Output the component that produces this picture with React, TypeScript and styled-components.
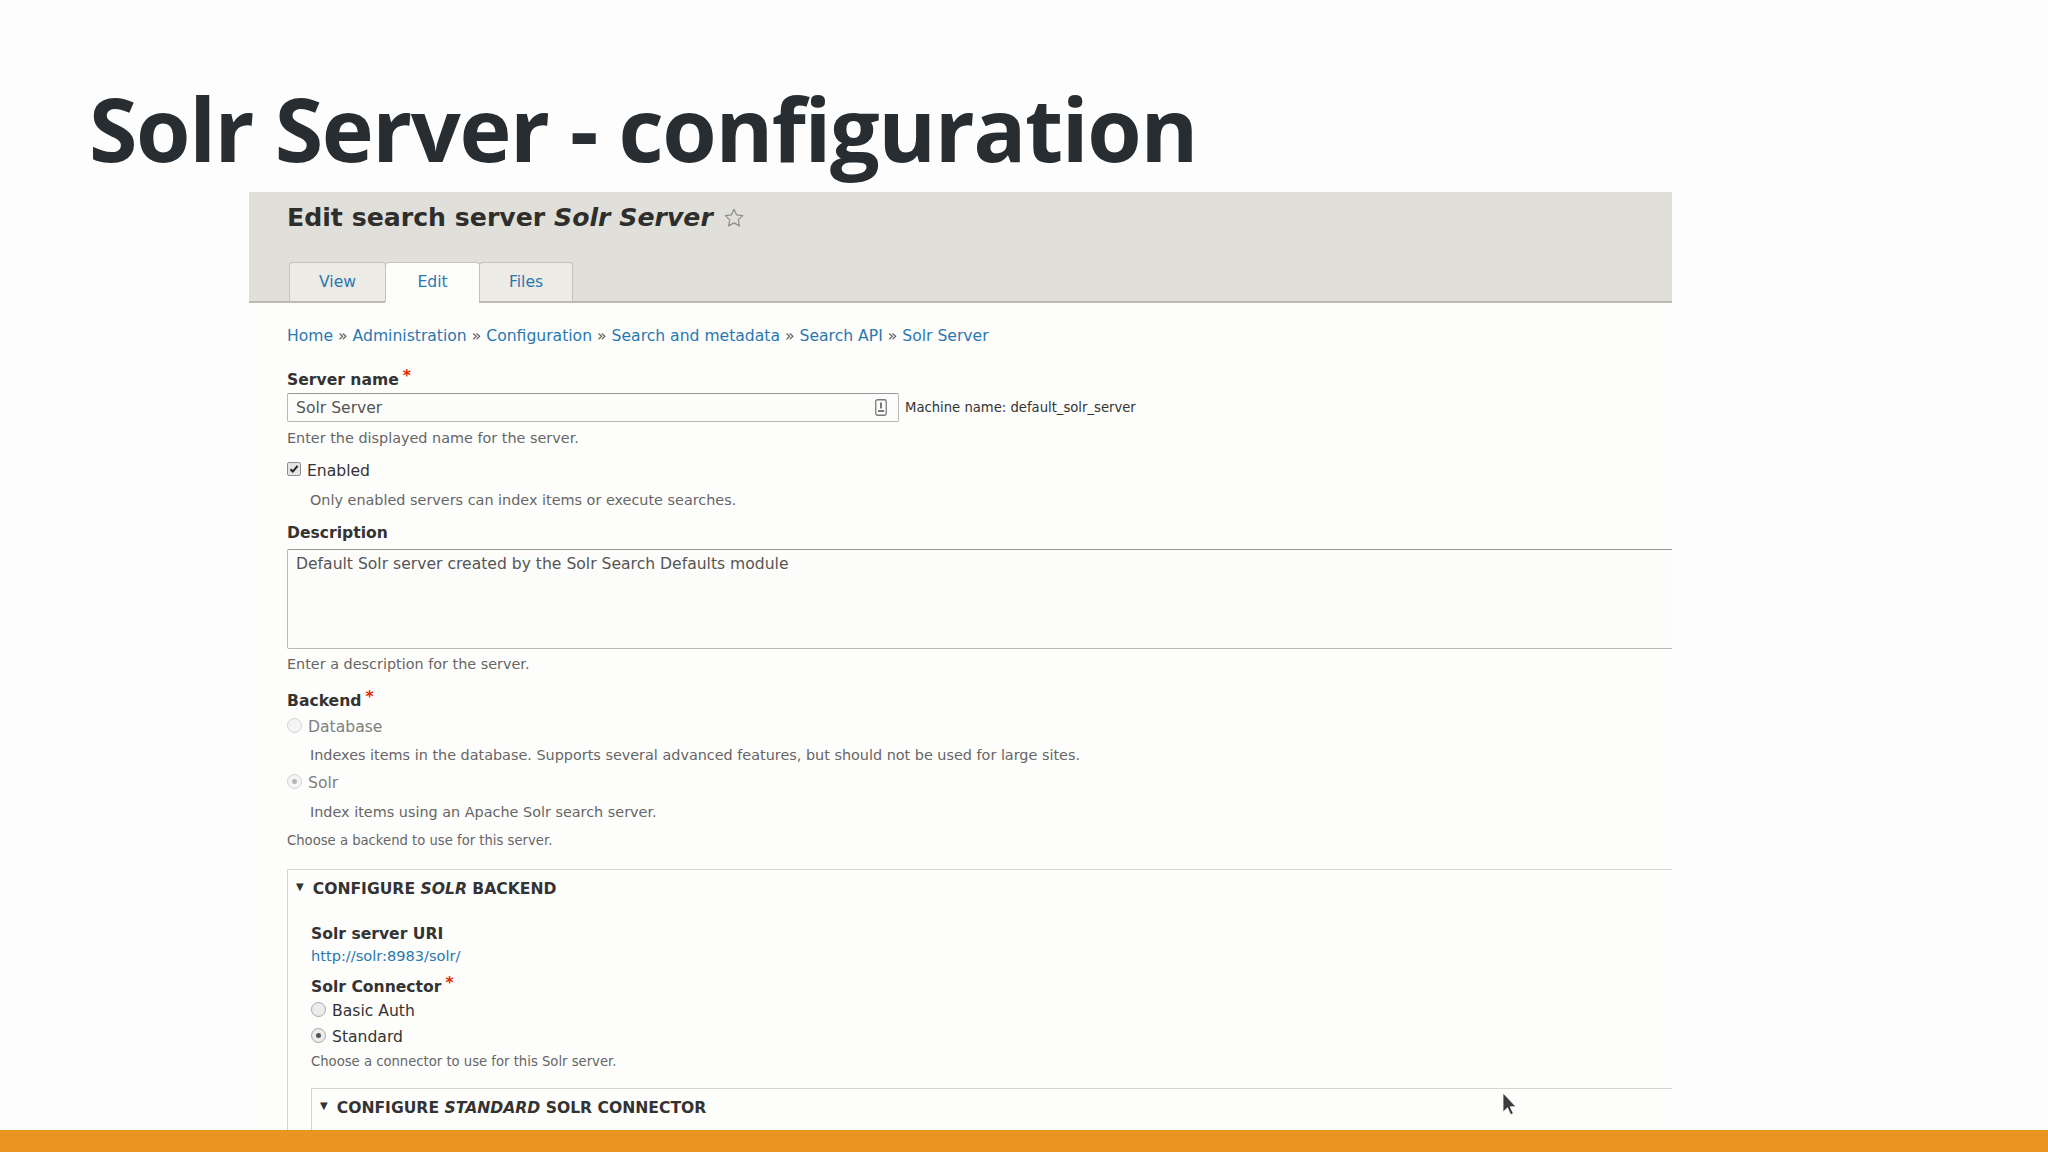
import React from 'react';
import styled, { createGlobalStyle } from 'styled-components';

const GlobalStyle = createGlobalStyle`
  html, body {
    margin: 0;
    padding: 0;
    background: #ffffff;
  }
`;

const Slide = styled.div`
  width: 2048px;
  height: 1152px;
  display: flex;
  flex-direction: column;
  background: #fdfdfd;
  overflow: hidden;
`;

const Title = styled.h1`
  margin: 83px 0 0 89px;
  font-family: 'Open Sans', sans-serif;
  font-weight: 700;
  font-size: 88px;
  line-height: 90px;
  letter-spacing: -1.4px;
  color: #272d31;
`;

const Shot = styled.div`
  position: relative;
  margin: 19px 0 0 249px;
  width: 1423px;
  flex: 1;
  overflow: hidden;
  background: #fdfdfb;
  font-family: 'DejaVu Sans', sans-serif;
  font-size: 15.6px;
  color: #333;
`;

const Header = styled.div`
  background: #e0dfd9;
  padding: 10px 0 0 38px;
  border-bottom: 2px solid #bcbab3;
`;

const PageTitle = styled.div`
  display: flex;
  align-items: center;
  gap: 10px;
  font-size: 25.2px;
  line-height: 32px;
  font-weight: bold;
  color: #2e2e2c;

  em {
    font-style: oblique;
  }
`;

const Tabs = styled.div`
  display: flex;
  margin: 28px 0 -2px 2px;
`;

const Tab = styled.div<{ $active?: boolean; $w: number }>`
  height: 41px;
  box-sizing: border-box;
  display: flex;
  align-items: center;
  justify-content: center;
  width: ${p => p.$w}px;
  color: #2a78b0;
  font-size: 15.6px;
  background: ${p => (p.$active ? '#fdfdfb' : '#ecebe6')};
  border: 1px solid #c4c2bb;
  border-bottom: ${p => (p.$active ? '2px solid #fdfdfb' : '2px solid #bcbab3')};
  border-radius: 4px 4px 0 0;
  margin-right: -1px;
`;

const Body = styled.div`
  padding: 23px 0 0 38px;
`;

const Crumbs = styled.div`
  line-height: 20px;
  color: #555;

  a {
    color: #2a78b0;
    text-decoration: none;
  }
`;

const Sep = styled.span`
  margin: 0 5px;
  color: #555;
`;

const Label = styled.div<{ $mt: number }>`
  margin-top: ${p => p.$mt}px;
  line-height: 20px;
  font-weight: bold;
  color: #333;
`;

const Req = styled.span`
  color: #e62600;
  margin-left: 4px;
  position: relative;
  top: -4px;
`;

const NameRow = styled.div`
  display: flex;
  align-items: center;
  margin-top: 3px;
`;

const TextInput = styled.div`
  width: 612px;
  height: 29px;
  box-sizing: border-box;
  display: flex;
  align-items: center;
  justify-content: space-between;
  padding: 0 11px 0 8px;
  border: 1px solid #b8b8b8;
  border-top-color: #999;
  border-radius: 2px;
  background: #fcfcfa;
  color: #555;
`;

const MachineName = styled.span`
  margin-left: 6px;
  font-size: 13.2px;
  color: #333;
`;

const Help = styled.div<{ $mt: number; $indent?: boolean; $small?: boolean }>`
  margin-top: ${p => p.$mt}px;
  margin-left: ${p => (p.$indent ? 23 : 0)}px;
  line-height: ${p => (p.$small ? 16 : 18)}px;
  font-size: ${p => (p.$small ? 13.2 : 14.4)}px;
  color: #666;
`;

const Option = styled.div<{ $mt: number; $muted?: boolean }>`
  margin-top: ${p => p.$mt}px;
  display: flex;
  align-items: center;
  gap: 6px;
  line-height: 20px;
  color: ${p => (p.$muted ? '#808080' : '#333')};
`;

const Check = styled.span`
  width: 12px;
  height: 12px;
  margin-top: -4px;
  border: 1px solid #8f8f8f;
  border-radius: 2px;
  background: #e4e4e4;
  display: flex;
  align-items: center;
  justify-content: center;
`;

const Radio = styled.span<{ $on?: boolean; $faint?: boolean }>`
  width: 13px;
  height: 13px;
  margin-top: -4px;
  border-radius: 50%;
  border: 1px solid ${p => (p.$faint ? '#d2d2d2' : '#a8a8a8')};
  background: ${p => (p.$faint ? '#f4f4f4' : '#ececec')};
  display: flex;
  align-items: center;
  justify-content: center;

  &::after {
    content: '';
    width: 5px;
    height: 5px;
    border-radius: 50%;
    background: ${p => (p.$on ? (p.$faint ? '#b4b4b4' : '#555') : 'transparent')};
  }
`;

const TextArea = styled.div`
  margin-top: 6px;
  margin-right: -30px;
  height: 100px;
  box-sizing: border-box;
  padding: 6px 8px;
  border: 1px solid #b8b8b8;
  border-top-color: #999;
  border-radius: 2px;
  background: #fcfcfa;
  color: #555;
  line-height: 16px;
`;

const Fieldset = styled.div<{ $mt: number }>`
  margin-top: ${p => p.$mt}px;
  margin-right: -30px;
  border: 1px solid #d4d4d2;
  border-right: none;
  border-bottom: none;
  padding: 9px 0 40px 0;
`;

const Summary = styled.div`
  display: flex;
  align-items: center;
  padding-left: 8px;
  gap: 9px;
  line-height: 20px;
  font-weight: bold;
  text-transform: uppercase;
  color: #333;

  em {
    font-style: oblique;
  }
`;

const Arrow = styled.span`
  font-size: 10px;
  margin-top: -4px;
`;

const Inner = styled.div`
  padding-left: 23px;
`;

const UriLink = styled.div`
  margin-top: 2px;
  line-height: 20px;
  font-size: 14.6px;
  color: #2a78b0;
`;

const Cursor = styled.svg`
  position: absolute;
  left: 1253px;
  top: 900px;
`;

const Footer = styled.div`
  height: 22px;
  background: #ea9522;
`;

const Star = () => (
  <svg width="22" height="22" viewBox="0 0 24 24" fill="none" stroke="#8d8d8a" strokeWidth="1.3" strokeLinejoin="round">
    <path d="M12 2.5l2.9 6.1 6.6.8-4.9 4.6 1.3 6.6L12 17.3l-5.9 3.3 1.3-6.6-4.9-4.6 6.6-.8z" />
  </svg>
);

const FieldIcon = () => (
  <svg width="12" height="17" viewBox="0 0 12 17" fill="none">
    <rect x="0.75" y="0.75" width="10.5" height="15.5" rx="1.8" stroke="#7a7a7a" strokeWidth="1.3" />
    <rect x="5" y="3.5" width="2" height="6" fill="#7a7a7a" />
    <rect x="3" y="11" width="6" height="2" fill="#7a7a7a" />
  </svg>
);

const Tick = () => (
  <svg width="10" height="10" viewBox="0 0 10 10">
    <path d="M1.5 5.2l2.3 2.4L8.6 1.8" stroke="#222" strokeWidth="2" fill="none" />
  </svg>
);

const crumbs = ['Home', 'Administration', 'Configuration', 'Search and metadata', 'Search API', 'Solr Server'];

const App = () => {
  return (
    <Slide>
      <GlobalStyle />
      <Title>Solr Server - configuration</Title>
      <Shot>
        <Header>
          <PageTitle>
            <span>Edit search server <em>Solr Server</em></span>
            <Star />
          </PageTitle>
          <Tabs>
            <Tab $w={97}>View</Tab>
            <Tab $w={95} $active>Edit</Tab>
            <Tab $w={94}>Files</Tab>
          </Tabs>
        </Header>
        <Body>
          <Crumbs>
            {crumbs.map((c, i) => (
              <React.Fragment key={c}>
                {i > 0 && <Sep>»</Sep>}
                <a>{c}</a>
              </React.Fragment>
            ))}
          </Crumbs>

          <Label $mt={24}>Server name<Req>*</Req></Label>
          <NameRow>
            <TextInput>
              <span>Solr Server</span>
              <FieldIcon />
            </TextInput>
            <MachineName>Machine name: default_solr_server</MachineName>
          </NameRow>
          <Help $mt={7}>Enter the displayed name for the server.</Help>

          <Option $mt={14}>
            <Check><Tick /></Check>
            <span>Enabled</span>
          </Option>
          <Help $mt={10} $indent>Only enabled servers can index items or execute searches.</Help>

          <Label $mt={14}>Description</Label>
          <TextArea>Default Solr server created by the Solr Search Defaults module</TextArea>
          <Help $mt={6}>Enter a description for the server.</Help>

          <Label $mt={18}>Backend<Req>*</Req></Label>
          <Option $mt={6} $muted>
            <Radio $faint />
            <span>Database</span>
          </Option>
          <Help $mt={9} $indent>Indexes items in the database. Supports several advanced features, but should not be used for large sites.</Help>
          <Option $mt={9} $muted>
            <Radio $faint $on />
            <span>Solr</span>
          </Option>
          <Help $mt={10} $indent>Index items using an Apache Solr search server.</Help>
          <Help $mt={12} $small>Choose a backend to use for this server.</Help>

          <Fieldset $mt={20}>
            <Summary>
              <Arrow>▼</Arrow>
              <span>Configure <em>Solr</em> backend</span>
            </Summary>
            <Inner>
              <Label $mt={25}>Solr server URI</Label>
              <UriLink>http://solr:8983/solr/</UriLink>
              <Label $mt={11}>Solr Connector<Req>*</Req></Label>
              <Option $mt={4}>
                <Radio />
                <span>Basic Auth</span>
              </Option>
              <Option $mt={6}>
                <Radio $on />
                <span>Standard</span>
              </Option>
              <Help $mt={7} $small>Choose a connector to use for this Solr server.</Help>
              <Fieldset $mt={18}>
                <Summary>
                  <Arrow>▼</Arrow>
                  <span>Configure <em>Standard</em> Solr connector</span>
                </Summary>
              </Fieldset>
            </Inner>
          </Fieldset>
        </Body>
        <Cursor width="16" height="24" viewBox="0 0 16 24">
          <path d="M1 1v19l4.5-4.2 3.2 7 2.6-1.2-3.1-6.8H14z" fill="#3c3c3e" stroke="#fff" strokeWidth="0.8" />
        </Cursor>
      </Shot>
      <Footer />
    </Slide>
  );
};

export default App;
